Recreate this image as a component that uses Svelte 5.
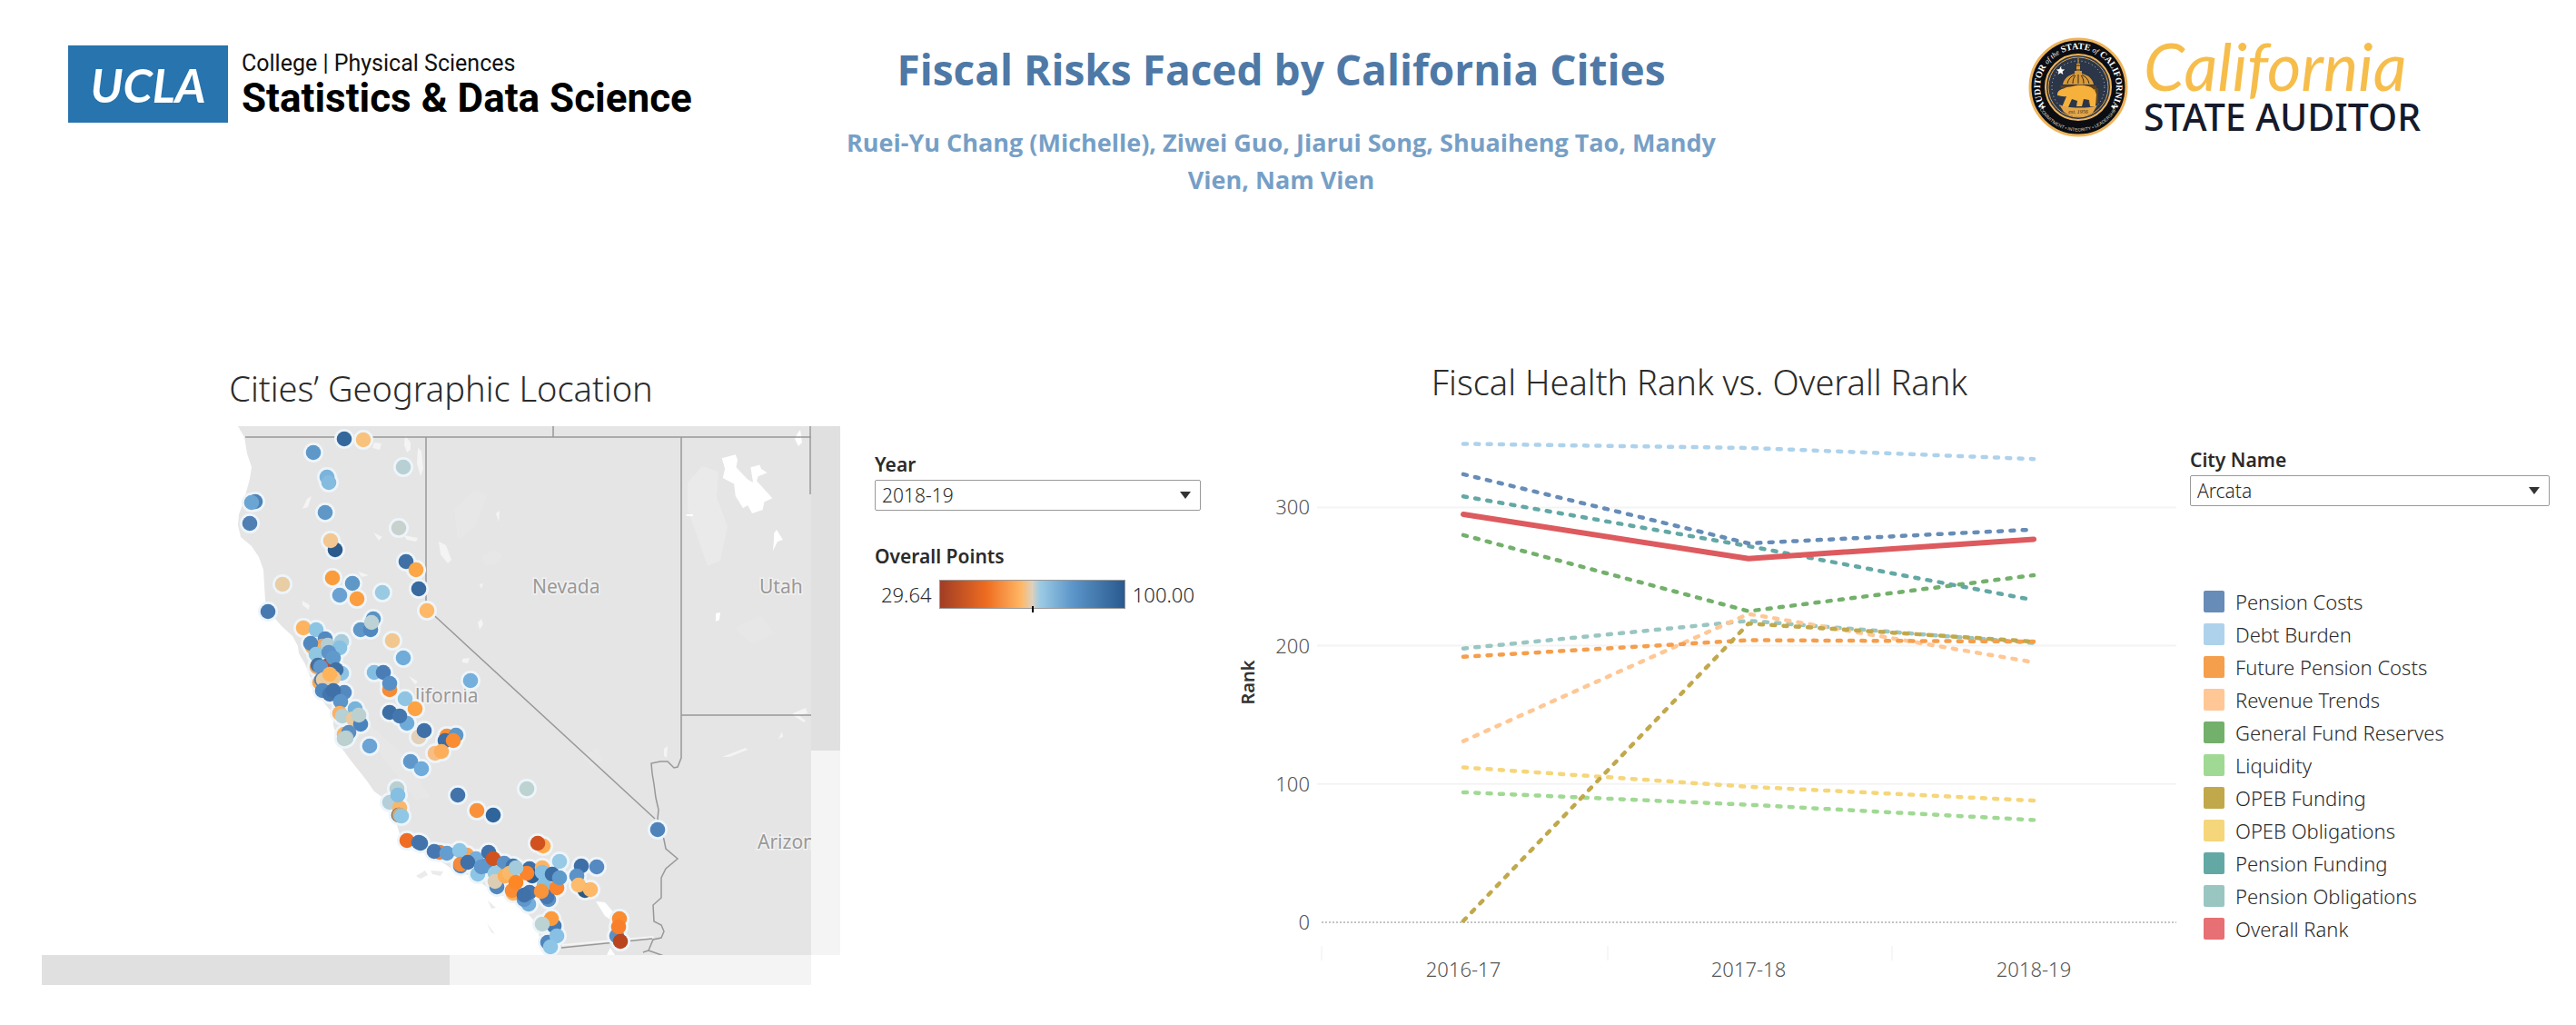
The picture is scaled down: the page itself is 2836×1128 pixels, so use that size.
<script>
  const years = ['2016-17', '2017-18', '2018-19'];
  const cities = ['Arcata', 'Berkeley', 'Fresno', 'Oakland', 'San Diego'];
  let year = $state('2018-19');
  let city = $state('Arcata');

  const legend = [
    { name: 'Pension Costs', color: '#678cb7', values: [324, 274, 284] },
    { name: 'Debt Burden', color: '#aed2eb', values: [346, 343, 335] },
    { name: 'Future Pension Costs', color: '#f59e4c', values: [192, 204, 203] },
    { name: 'Revenue Trends', color: '#ffc795', values: [131, 223, 188] },
    { name: 'General Fund Reserves', color: '#73b06b', values: [280, 225, 251] },
    { name: 'Liquidity', color: '#a0d993', values: [94, 85, 74] },
    { name: 'OPEB Funding', color: '#c1a84b', values: [1, 216, 203] },
    { name: 'OPEB Obligations', color: '#f5d67a', values: [112, 98, 88] },
    { name: 'Pension Funding', color: '#63a8a5', values: [308, 272, 233] },
    { name: 'Pension Obligations', color: '#9ac6c2', values: [198, 218, 202] },
    { name: 'Overall Rank', color: '#e67073', values: [295, 263, 277] }
  ];

  const lineOrder = [1, 5, 7, 4, 8, 9, 3, 2, 6, 0];
  const lines = lineOrder.map((i) => legend[i]);
  const overall = legend[10];
  const px = (i) => 1611 + i * 314;
  const py = (v) => 1014 - v * 1.522;
  const points = (values) => values.map((v, i) => `${px(i)},${py(v)}`).join(' ');

  const dots = [
    [379, 482, '#34689c'], [400, 483, '#f9c27c'], [345, 497, '#5e98c8'], [444, 513, '#b8d0d4'],
    [360, 524, '#7ab4da'], [362, 530, '#84bbdf'], [281, 551, '#4f81b5'], [277, 552, '#6ba5d3'],
    [275, 575, '#4f7fb3'], [358, 563, '#5f97c7'], [369, 604, '#2c5a8c'], [364, 594, '#f3c792'],
    [439, 580, '#c7d2ce'], [447, 617, '#3f70a6'], [458, 626, '#fda645'], [366, 635, '#fb9c3c'],
    [388, 641, '#5f97c7'], [374, 654, '#6ba1d2'], [393, 658, '#fc9e40'], [421, 651, '#9acae2'],
    [461, 647, '#38699f'], [470, 671, '#ffb867'], [311, 642, '#e9cda4'], [295, 672, '#4779b0'],
    [411, 680, '#5a92c4'], [397, 692, '#5f97c9'], [408, 692, '#5088bf'], [409, 684, '#bcd2d4'],
    [334, 690, '#feb45f'], [348, 692, '#8cc5e3'], [432, 704, '#f2c78f'], [444, 723, '#6facd9'],
    [518, 748, '#74b0db'], [358, 702, '#5289c0'], [355, 710, '#f2a55f'], [344, 711, '#fbb062'],
    [342, 707, '#5087bf'], [361, 709, '#b4ced5'], [376, 705, '#a8ccdb'], [374, 712, '#88c0e2'],
    [348, 719, '#90c8e2'], [362, 717, '#5d93c8'], [360, 732, '#c0492a'], [367, 723, '#6099cc'],
    [349, 733, '#f2a55f'], [376, 740, '#8cc3e3'], [370, 736, '#3f70a6'], [350, 731, '#44719f'],
    [353, 733, '#5f97cc'], [352, 750, '#fda645'], [354, 747, '#4c80b6'], [367, 745, '#eec795'],
    [356, 747, '#e9cba4'], [363, 741, '#ffb45c'], [355, 759, '#4f88be'], [379, 761, '#5489bf'],
    [363, 763, '#4575ad'], [367, 759, '#3f71a8'], [375, 771, '#5b95ca'], [391, 779, '#78b3da'],
    [374, 784, '#fbb062'], [377, 787, '#b6d0d4'], [389, 790, '#e8c9a0'], [397, 796, '#4a84bd'],
    [395, 786, '#bcd0cf'], [379, 807, '#fdb362'], [384, 805, '#5b8dbf'], [381, 811, '#b4ccd2'],
    [379, 812, '#bcd0cf'], [407, 820, '#6ba3d4'], [412, 739, '#82bde1'], [422, 739, '#4a7db5'],
    [429, 758, '#f98a33'], [429, 751, '#5690c6'], [446, 768, '#8fc5e3'], [457, 779, '#fda343'],
    [448, 795, '#6fabd9'], [429, 783, '#3c6da5'], [440, 787, '#4377ae'], [461, 810, '#e2d0b8'],
    [467, 803, '#3f70a8'], [492, 809, '#f98d35'], [502, 808, '#5f97c7'], [490, 814, '#3c6da5'],
    [499, 814, '#fa8c31'], [479, 828, '#f7bd84'], [486, 826, '#fdae5a'], [452, 837, '#5f97cb'],
    [464, 845, '#6fabdb'], [437, 867, '#b9cfd0'], [429, 882, '#b4cfda'], [440, 888, '#fab669'],
    [438, 874, '#85bfe2'], [439, 896, '#5a6670'], [440, 896, '#d8a56a'], [442, 897, '#8fc7e5'],
    [504, 874, '#4273aa'], [525, 891, '#fa913a'], [543, 896, '#2f659a'], [580, 867, '#bcd3d2'],
    [724, 912, '#5083ba'], [448, 924, '#ee6d22'], [461, 926, '#4576b0'], [463, 927, '#4273aa'],
    [484, 937, '#f0803a'], [478, 936, '#4677b0'], [492, 938, '#649dd0'], [514, 940, '#f9a457'],
    [506, 935, '#8cc5e6'], [507, 952, '#5088bf'], [507, 950, '#f68a3a'], [524, 944, '#75aedb'],
    [515, 948, '#3f70a8'], [526, 961, '#8cc5e6'], [534, 952, '#5893c8'], [530, 953, '#5f97cc'],
    [538, 937, '#4070a8'], [543, 944, '#d0521f'], [555, 949, '#5b90c4'], [545, 960, '#9acbe2'],
    [547, 975, '#5086bd'], [545, 969, '#dccdb5'], [565, 952, '#4273aa'], [583, 955, '#3f6fa4'],
    [586, 963, '#2e5f94'], [556, 963, '#feaf57'], [561, 960, '#f9b96a'], [580, 960, '#fb842d'],
    [568, 954, '#a3cbdc'], [597, 954, '#fdb362'], [597, 959, '#85c0e4'], [599, 973, '#85bfe2'],
    [565, 982, '#fdb15c'], [564, 979, '#f98c35'], [568, 970, '#fd8724'], [582, 994, '#74aedb'],
    [577, 989, '#5f97cc'], [583, 981, '#4576b0'], [577, 984, '#4071a9'], [604, 989, '#5b90c4'],
    [602, 986, '#4677b0'], [596, 980, '#f9943b'], [613, 976, '#fb842d'], [616, 947, '#98c9e5'],
    [608, 961, '#3c6da5'], [616, 965, '#5f9acc'], [598, 930, '#feab50'], [592, 927, '#d1511f'],
    [640, 952, '#3f6fa8'], [657, 953, '#5489c2'], [635, 963, '#5b92c8'], [644, 979, '#2e5a80'],
    [637, 973, '#fdbb6c'], [650, 978, '#fdb968'], [610, 1018, '#4478b0'], [607, 1010, '#fd9a3c'],
    [597, 1016, '#bcd3d4'], [603, 1036, '#4f86bd'], [613, 1029, '#88bfe4'], [606, 1041, '#8cc5e6'],
    [682, 1010, '#fb8b30'], [679, 1029, '#5b90c4'], [681, 1019, '#fa7f2b'], [683, 1035, '#b8451e']
  ];
</script>

<div class="page">
  <header>
    <div class="ucla">
      <div class="ucla-box">UCLA</div>
      <div class="ucla-words">
        <span class="college">College | Physical Sciences</span>
        <span class="dept">Statistics &amp; Data Science</span>
      </div>
    </div>

    <div class="heading">
      <h1>Fiscal Risks Faced by California Cities</h1>
      <p>Ruei-Yu Chang (Michelle), Ziwei Guo, Jiarui Song, Shuaiheng Tao, Mandy Vien, Nam Vien</p>
    </div>

    <div class="auditor">
      <svg class="seal" viewBox="0 0 110 110" role="img" aria-label="Auditor of the State of California seal">
        <defs>
          <path id="seal-top" d="M17.500 74A42 42 0 1 1 92.500 74" />
          <path id="seal-bottom" d="M12 78A49 49 0 0 0 98 78" />
        </defs>
        <circle cx="55" cy="55" r="53" fill="#0b0d12" stroke="#eeb45c" stroke-width="3" />
        <circle cx="55" cy="55" r="36" fill="#2b3649" stroke="#eeb45c" stroke-width="2" />
        <circle cx="55" cy="55" r="33" fill="none" stroke="#d9a14a" stroke-width="1" />
        <circle cx="55" cy="55" r="29" fill="none" stroke="#c9ced6" stroke-width="1" stroke-dasharray="1 3" />
        <text class="seal-text" fill="#fff"><textPath href="#seal-top" startOffset="50%" text-anchor="middle">AUDITOR <tspan class="of">of the</tspan> STATE <tspan class="of">of</tspan> CALIFORNIA</textPath></text>
        <text class="seal-small" fill="#d8d2c4"><textPath href="#seal-bottom" startOffset="50%" text-anchor="middle">COMMITMENT • INTEGRITY • LEADERSHIP</textPath></text>
        <circle cx="16" cy="77" r="1.500" fill="#fff" />
        <circle cx="94" cy="77" r="1.500" fill="#fff" />
        <path d="M35.500 32l1.300 3.200 3.400.3-2.600 2.200.8 3.400-2.900-1.900-2.900 1.900.8-3.400-2.600-2.200 3.400-.3z" fill="#fff" />
        <path d="M54.500 23h1v6h1.500v8h2v3c7 1.500 12 6 13 12H38c1-6 6-10.500 13-12v-3h2v-8h1.500z" fill="#d99a38" />
        <path d="M43 51c1-5 4-8 8-9.500M49 51c0-4 1-7 3-9M55 51v-10M61 51c0-4-1-7-3-9M67 51c-1-5-4-8-8-9.500M52 31h6M51 36h8" fill="none" stroke="#3a2a16" stroke-width="1" />
        <path d="M35 53h40v3h2v17H66V56H36z" fill="#5b421e" />
        <path d="M39 57v8M70 57v14M73 57v14" stroke="#d99a38" stroke-width="1" />
        <path d="M32 62c1-4 5-5 8-6 3-2 6-1 9-2 6-2 12-1 17 0 5 1 8 5 9 9l-1 13h-6l-1-7-6-1-2 8h-6l1-6-6-2-4 9h-7l5-12c-4 1-7-1-10-1z" fill="#f6b03c" />
        <path d="M34 74c7 4 32 5 42 1l-5 8c-9 7-24 6-32-1z" fill="#e3a648" />
        <text x="55" y="84" text-anchor="middle" class="est">est. 1956</text>
      </svg>
      <div class="auditor-words">
        <span class="script">California</span>
        <span class="state">STATE AUDITOR</span>
      </div>
    </div>
  </header>

  <main>
    <section class="map-panel">
      <h2>Cities’ Geographic Location</h2>
      <div class="map-frame">
        <svg class="map" viewBox="46 468 847 582" role="img" aria-label="Map of California cities">
          <path
            d="M262 468L269 480 272 498 277 513 275 526 272 537 268 552 263 565 262 577 265 590 277 600 285 612 290 626 291 643 292 660 297 673 310 688 322 699 328 710 329 718 336 730 340 740 346 755 353 768 367 785 367 797 373 818 387 837 403 857 412 870 422 877 434 895 437 907 443 927 458 934 473 940 490 950 500 957 518 963 533 973 545 982 560 987 570 996 580 1003 590 1015 594 1030 597 1040 600 1050H893V468z"
            fill="#e5e5e5"
          />
          <g fill="#ebebeb">
            <path d="M757 530l16-18 18 6-2 28 12 32-8 38-14 6-14-40-8-22z" opacity=".8" />
            <path d="M500 560l22-22 14 6-12 34-20 16zM530 612l14-8 10 6-8 10-12 2z" opacity=".3" />
            <path d="M400 790l40 36 34 50-16 4-46-60z" opacity=".3" />
            <path d="M640 830l18-8 6 14-12 8zM808 690l30-14 14 20-24 12z" opacity=".3" />
          </g>
          <g fill="#f4f4f4">
            <path d="M446 478l6 8v8l-4 3-3-8zM460 492l4 3 2 20-3 8-4-14zM412 486l8 1-2 7-8-2z" />
            <path d="M483 595l8 4 6 16-4 4-8-10zM338 548l5-3-4 12-6 2zM546 564l4-3-1 12zM411 585l10 5-4 4zM444 588l16 3-2 4-10-2z" />
            <path d="M333 660l8 5-1 5-7-5zM394 628l12 4-8 2zM526 684l4-4 2 6-4 6zM528 642l4-1-2 6zM509 724l8-1-2 6-6-1z" />
            <path d="M450 743l10 6-3 3zM731 823l4-3-1 13-3-2zM795 832l26-10 2 2-20 8zM873 784l14-6 2 6-10 2 8 6-2 2-12-8zM857 812l4-8 1 6z" />
            <path d="M878 476l3-4 2 14-4 4-4-8zM788 674l5-1-1 8-4 2zM755 565h8v2h-7zM852 586l3-4 7 11-6 2-5 10 1-12z" fill="#fff" />
            <path d="M705 130l45-12 7 17-5 25 38 40 18 10-8-50 30-8 5 13 20 13-30 12-5 15 52 57-27 13-5 25-35 12-15-27-15 10-25-40-5-40-37-20 7-30z" transform="translate(560 460) scale(.333)" fill="#fff" />
            <path d="M656 991l10 1 13 15-4 6-9-6zM668 1050l4-8 5 8z" fill="#fff" />
            <path d="M619 1038l100-9 1 2-101 9z" />
          </g>
          <path d="M458 963l10-6 3 5-8 4zM474 957l14 1-3 5-9-2zM537 990l9 8-5 1zM536 1015l9 12-4-2z" fill="#ebebeb" />
          <g fill="none" stroke="#989898" stroke-width="1.500">
            <path d="M270 480H893M469 480V668L721 900M609 468V480M750 480V833L746 843 742 844 735 837 727 837 717 839 718 850 720 862 722 877 725 890 724 900 731 923 733 933 746 944 733 955 728 965 728 987 719 995 720 1013 728 1017 731 1024 728 1031 719 1033 714 1045 708 1047M714 1045L731 1051M618 1042L718 1032M750 786H893" />
            <path d="M892 468V543" />
          </g>
          <g class="places">
            <text x="586" y="652">Nevada</text>
            <text x="836" y="652">Utah</text>
            <text x="457" y="772">lifornia</text>
            <text x="834" y="933">Arizona</text>
          </g>
          <g fill="#eef5fa">
            {#each dots as [x, y]}<circle cx={x} cy={y} r="11" />{/each}
          </g>
          {#each dots as [x, y, color]}<circle cx={x} cy={y} r="8.300" fill={color} />{/each}
        </svg>
        <div class="track vertical"><div class="thumb"></div></div>
        <div class="track horizontal"><div class="thumb"></div></div>
      </div>
    </section>

    <section class="controls">
      <label for="year">Year</label>
      <div class="select">
        <select id="year" bind:value={year}>
          {#each years as y}<option>{y}</option>{/each}
        </select>
        <svg viewBox="0 0 12 8" aria-hidden="true"><path d="M0 0h12L6 8z" fill="#333" /></svg>
      </div>
      <h3>Overall Points</h3>
      <div class="scale">
        <span>29.64</span>
        <div class="ramp"></div>
        <span>100.00</span>
      </div>
    </section>

    <section class="chart-panel">
      <h2>Fiscal Health Rank vs. Overall Rank</h2>
      <svg class="chart" viewBox="1360 450 1036 640" role="img" aria-label="Fiscal health rank by year">
        <g stroke="#f4f4f4" stroke-width="2">
          {#each [100, 200, 300] as v}<path d={`M1450 ${py(v)}H2396`} />{/each}
          <path d="M1455 1040V1056M1770 1040V1056M2083 1040V1056" stroke="#eee" stroke-width="1" />
        </g>
        <path d="M1455 1014H2396" stroke="#c4c4c4" stroke-width="2" stroke-dasharray="2 2" />
        <g fill="none" stroke-width="4.500" stroke-dasharray="4 9.300" stroke-linecap="round" stroke-linejoin="round">
          {#each lines as line}<polyline points={points(line.values)} stroke={line.color} />{/each}
        </g>
        <polyline points={points(overall.values)} fill="none" stroke="#dd5a5e" stroke-width="6" stroke-linecap="round" stroke-linejoin="round" />
        <g class="axis" text-anchor="end">
          {#each [0, 100, 200, 300] as v}<text x="1442" y={py(v) + 8}>{v}</text>{/each}
        </g>
        <g class="axis" text-anchor="middle">
          {#each years as y, i}<text x={px(i)} y="1074">{y}</text>{/each}
        </g>
        <text class="axis-title" transform="translate(1381 750) rotate(-90)" text-anchor="middle">Rank</text>
      </svg>
    </section>

    <section class="legend-panel">
      <label for="city">City Name</label>
      <div class="select">
        <select id="city" bind:value={city}>
          {#each cities as c}<option>{c}</option>{/each}
        </select>
        <svg viewBox="0 0 12 8" aria-hidden="true"><path d="M0 0h12L6 8z" fill="#333" /></svg>
      </div>
      <ul>
        {#each legend as item}
          <li><i style:background={item.color}></i>{item.name}</li>
        {/each}
      </ul>
    </section>
  </main>
</div>

<style>
  :global(body) {
    background: #fff;
  }
  .page {
    font-family: 'Noto Sans', 'Open Sans', sans-serif;
    font-size: 22px;
    color: #2b2b2b;
  }
  header {
    display: grid;
    grid-template-columns: 925fr 971fr 940fr;
    height: 391px;
  }
  .ucla {
    display: flex;
    align-items: flex-start;
    gap: 15px;
    padding: 50px 0 0 75px;
  }
  .ucla-box {
    display: flex;
    align-items: center;
    justify-content: center;
    width: 176px;
    height: 85px;
    background: #2774ae;
    color: #fff;
    font: italic 700 52px Lato, sans-serif;
  }
  .ucla-words {
    display: flex;
    flex-direction: column;
    padding-top: 4px;
    font-family: Roboto, 'Liberation Sans', sans-serif;
    color: #000;
    white-space: nowrap;
  }
  .college {
    font-size: 25px;
    line-height: 32px;
    color: #111;
  }
  .dept {
    font-size: 44px;
    font-weight: 700;
    line-height: 44px;
  }
  .heading {
    padding-top: 44px;
    text-align: center;
    font-family: 'Open Sans', sans-serif;
  }
  h1 {
    margin: 0;
    font-size: 46px;
    line-height: 64px;
    font-weight: 700;
    color: #4e79a7;
  }
  .heading p {
    margin: 28px 0 0;
    font-size: 27px;
    line-height: 41px;
    font-weight: 700;
    color: #769fc6;
  }
  .auditor {
    display: flex;
    align-items: flex-start;
    gap: 17px;
    padding: 41px 0 0 337px;
  }
  .seal {
    width: 110px;
    height: 110px;
  }
  .seal-text {
    font: 700 10px 'Liberation Serif', serif;
  }
  .seal-text .of {
    font-style: italic;
    font-weight: 400;
    font-size: 8px;
  }
  .seal-small {
    font: 5px 'Liberation Sans', sans-serif;
  }
  .est {
    font: italic 6px 'Liberation Serif', serif;
    fill: #3a2a16;
  }
  .auditor-words {
    display: flex;
    flex-direction: column;
    white-space: nowrap;
  }
  .script {
    font: italic 400 72px/62px Lato, sans-serif;
    color: #f6bd4b;
  }
  .state {
    font-size: 41px;
    line-height: 50px;
    font-weight: 500;
    color: #161a2b;
  }
  main {
    display: grid;
    grid-template-columns: 925fr 435fr 1036fr 440fr;
    align-items: start;
  }
  h2 {
    margin: 0;
    font-size: 38px;
    line-height: 48px;
    font-weight: 350;
    text-align: center;
    white-space: nowrap;
  }
  .map-panel {
    padding-left: 46px;
    padding-top: 12px;
  }
  .map-frame {
    display: grid;
    grid-template-columns: 1fr 32px;
    margin-top: 18px;
  }
  .map {
    display: block;
    width: 100%;
    height: auto;
  }
  .places {
    font-size: 21px;
    fill: #999;
    stroke: #f2f2f2;
    stroke-width: 3px;
    paint-order: stroke;
  }
  .track {
    background: #f4f4f4;
  }
  .thumb {
    background: #e0e0e0;
  }
  .vertical .thumb {
    height: 61.4%;
  }
  .horizontal {
    height: 33px;
  }
  .horizontal .thumb {
    width: 53%;
    height: 100%;
  }
  .controls {
    padding: 104px 38px 0;
  }
  label,
  h3 {
    display: block;
    margin: 0;
    font-size: 21px;
    line-height: 33px;
    font-weight: 600;
  }
  .select {
    display: grid;
    height: 34px;
    align-items: center;
  }
  select {
    grid-area: 1 / 1;
    appearance: none;
    width: 100%;
    height: 100%;
    padding: 0 7px;
    border: 1px solid #999;
    border-radius: 2px;
    background: #fff;
    color: #2b2b2b;
    font: 350 21px/28px 'Noto Sans', sans-serif;
  }
  .select svg {
    grid-area: 1 / 1;
    justify-self: end;
    width: 12px;
    height: 8px;
    margin-right: 11px;
    pointer-events: none;
  }
  h3 {
    margin-top: 34px;
  }
  .scale {
    display: flex;
    align-items: center;
    gap: 8px;
    margin-top: 9px;
    padding: 0 7px;
    line-height: 32px;
    font-weight: 350;
  }
  .ramp {
    position: relative;
    flex: 1;
    height: 30px;
    border: 1px solid #999;
    background: linear-gradient(90deg, #a13d25, #ee6c20 25%, #ffb765 44%, #ddd0bd 50%, #9ccbe4 54%, #5b95c9 72%, #2a5a8f);
  }
  .ramp::after {
    content: '';
    position: absolute;
    left: 50%;
    bottom: -5px;
    width: 2px;
    height: 7px;
    background: #000;
  }
  .chart-panel {
    padding-top: 5px;
  }
  .chart-panel h2 {
    padding-right: 14px;
  }
  .chart {
    display: block;
    width: 100%;
    height: auto;
    margin-top: 7px;
  }
  .axis {
    font-size: 22px;
    font-weight: 350;
    fill: #555;
  }
  .axis-title {
    font-size: 20px;
    font-weight: 600;
    fill: #333;
  }
  .legend-panel {
    padding: 99px 29px 0 15px;
  }
  ul {
    margin: 87px 0 0;
    padding: 0 0 0 15px;
    list-style: none;
  }
  li {
    display: flex;
    align-items: center;
    gap: 12px;
    height: 36px;
    font-size: 22px;
    line-height: 36px;
    font-weight: 350;
    white-space: nowrap;
  }
  li i {
    width: 23px;
    height: 24px;
    border-radius: 2px;
  }
</style>
